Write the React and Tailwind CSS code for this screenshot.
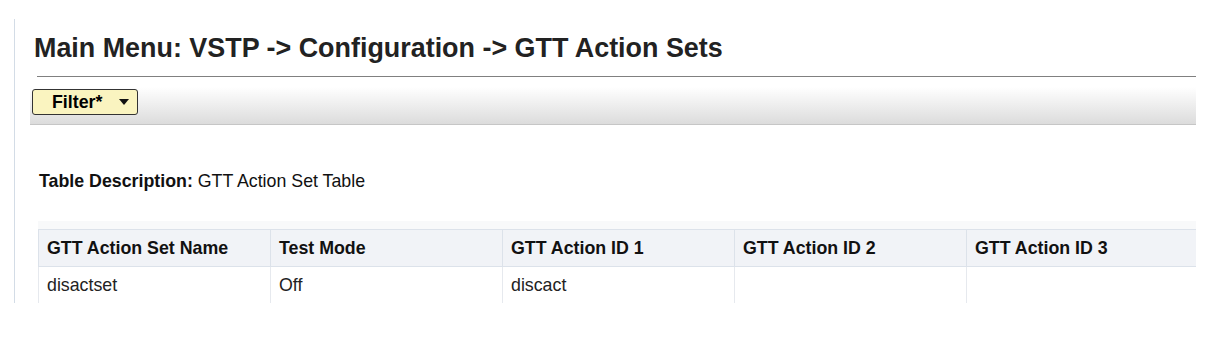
import React from 'react';

const columns = ['GTT Action Set Name', 'Test Mode', 'GTT Action ID 1', 'GTT Action ID 2', 'GTT Action ID 3'];
const rows = [['disactset', 'Off', 'discact', '', '']];

export default function App() {
  return (
    <div className="h-[355px] bg-white pt-[19px] font-['Liberation_Sans',Arial,sans-serif] text-[#222]">
      <div className="ml-[14px] w-[1182px] h-[284px] border-l border-[#d3dce6] overflow-hidden">
        <h1 className="ml-[19px] pt-[14px] text-[26.9px] leading-[30px] font-bold text-[#222]">
          Main Menu: VSTP -&gt; Configuration -&gt; GTT Action Sets
        </h1>
        <div className="ml-[22px] mt-[13px] border-t border-[#808080]" />
        <div className="ml-[15px] mt-[10px] h-[38px] bg-gradient-to-b from-white to-[#dcdcdc] border-b border-[#c6c6c6] pt-[2px] pl-[2px]">
          <button className="flex items-center w-[106px] h-[26px] bg-[#faf4c0] border border-[#333] rounded-[3px] pl-[19px]">
            <span className="text-[17.8px] font-bold text-black">Filter*</span>
            <svg className="ml-[17px]" width="10" height="6" viewBox="0 0 10 6">
              <path d="M0 0 H10 L5 6 Z" fill="#111" />
            </svg>
          </button>
        </div>
        <p className="ml-[24px] mt-[45px] text-[17.8px] leading-[22px] text-[#111]">
          <span className="font-bold">Table Description:</span> GTT Action Set Table
        </p>
        <div className="ml-[23px] mt-[29px] h-[8px] bg-[#f8f9fa]" />
        <table className="ml-[23px] border-collapse table-fixed w-[1160px] text-[17.8px]">
          <thead>
            <tr className="bg-[#f1f3f7]">
              {columns.map((c) => (
                <th
                  key={c}
                  className="w-[232px] h-[37px] text-left font-bold text-[#111] px-[8px] border border-[#dce2ea]"
                >
                  {c}
                </th>
              ))}
            </tr>
          </thead>
          <tbody>
            {rows.map((r, i) => (
              <tr key={i}>
                {r.map((v, j) => (
                  <td key={j} className="h-[37px] px-[8px] pt-[1px] text-[#222] border-x border-[#e6e9ee]">
                    {v}
                  </td>
                ))}
              </tr>
            ))}
          </tbody>
        </table>
      </div>
    </div>
  );
}
